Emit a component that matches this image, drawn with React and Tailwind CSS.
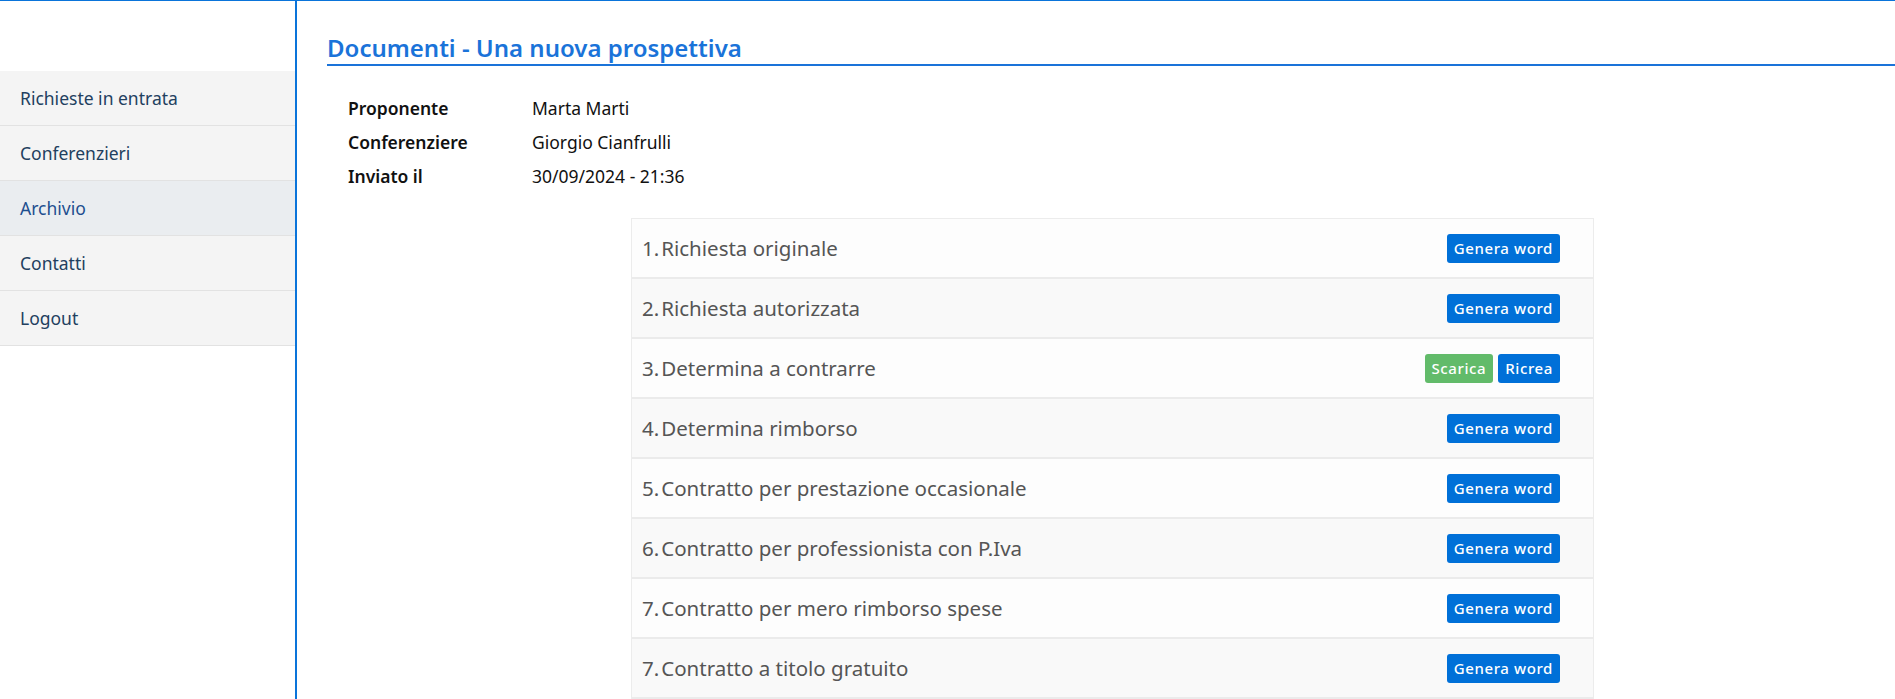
import React from 'react';

const menu = [
  { label: 'Richieste in entrata' },
  { label: 'Conferenzieri' },
  { label: 'Archivio', active: true },
  { label: 'Contatti' },
  { label: 'Logout' },
];

const info = [
  ['Proponente', 'Marta Marti'],
  ['Conferenziere', 'Giorgio Cianfrulli'],
  ['Inviato il', '30/09/2024 - 21:36'],
];

const docs = [
  { n: '1.', title: 'Richiesta originale' },
  { n: '2.', title: 'Richiesta autorizzata' },
  { n: '3.', title: 'Determina a contrarre', ready: true },
  { n: '4.', title: 'Determina rimborso' },
  { n: '5.', title: 'Contratto per prestazione occasionale' },
  { n: '6.', title: 'Contratto per professionista con P.Iva' },
  { n: '7.', title: 'Contratto per mero rimborso spese' },
  { n: '7.', title: 'Contratto a titolo gratuito' },
];

const Btn = ({ children, green }) => (
  <button
    className={
      'h-[29px] px-[7px] rounded-[3px] text-white text-[15px] font-medium tracking-[0.6px] leading-none ' +
      (green ? 'bg-[#62bb6a]' : 'bg-[#0070d8]')
    }
  >
    {children}
  </button>
);

export default function App() {
  return (
    <div className="min-h-screen flex border-t border-[#0a74da] bg-white font-['Noto_Sans',sans-serif]">
      <aside className="w-[297px] shrink-0 border-r-2 border-[#0a74da] pt-[70px]">
        {menu.map((m) => (
          <div
            key={m.label}
            className={
              'h-[55px] flex items-center px-5 text-[17.5px] border-b border-[#e2e2e2] ' +
              (m.active ? 'bg-[#eaedf0] text-[#1d4f8f]' : 'bg-[#f4f4f4] text-[#22405f]')
            }
          >
            {m.label}
          </div>
        ))}
      </aside>

      <main className="flex-1 pl-[30px] pt-[31px]">
        <h2 className="text-[24px] leading-[32px] font-semibold text-[#1a73d9] border-b-2 border-[#1a73d9]">
          Documenti - Una nuova prospettiva
        </h2>

        <div className="pl-[21px] pt-[25px] flex flex-col">
          {info.map(([k, v]) => (
            <div key={k} className="flex h-[34px] items-center text-[17.5px] text-[#111]">
              <span className="w-[184px] font-semibold">{k}</span>
              <span>{v}</span>
            </div>
          ))}
        </div>

        <div className="ml-[304px] mt-[25px] w-[963px] border border-[#ececec] border-b-0">
          {docs.map((d, i) => (
            <div
              key={i}
              className={
                'h-[60px] flex items-center justify-between pl-[10px] pr-[33px] border-b-2 border-[#ebebeb] ' +
                (i % 2 === 0 ? 'bg-[#fdfdfd]' : 'bg-[#f9f9f9]')
              }
            >
              <div className="flex text-[20.5px] text-[#555]">
                <span className="mr-[2px]">{d.n}</span>
                <span>{d.title}</span>
              </div>
              {d.ready ? (
                <div className="flex gap-[5px]">
                  <Btn green>Scarica</Btn>
                  <Btn>Ricrea</Btn>
                </div>
              ) : (
                <Btn>Genera word</Btn>
              )}
            </div>
          ))}
        </div>
      </main>
    </div>
  );
}
